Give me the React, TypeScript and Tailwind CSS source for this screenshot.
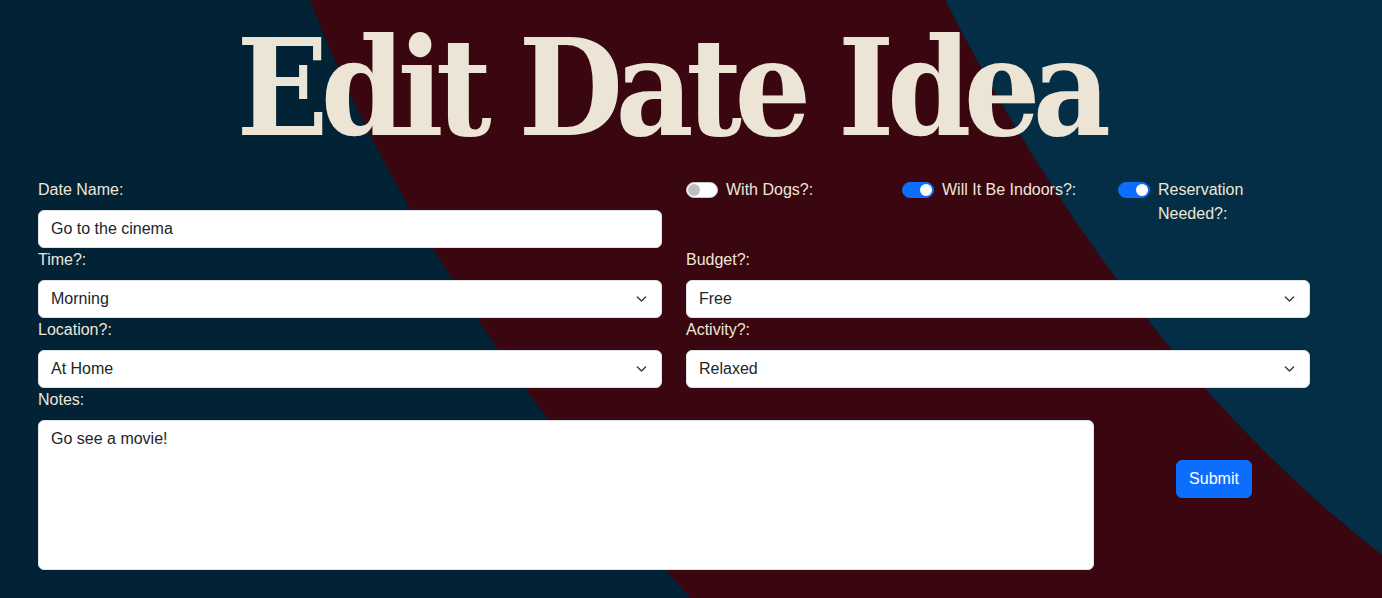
import { useState } from 'react';

const chevron = (
  <svg
    className="pointer-events-none absolute right-[15px] top-1/2 -translate-y-1/2"
    width="11"
    height="11"
    viewBox="0 0 16 16"
  >
    <path d="m2 5 6 6 6-6" fill="none" stroke="#343a40" strokeWidth="2" strokeLinecap="round" strokeLinejoin="round" />
  </svg>
);

function Toggle({ label, checked, onChange, labelWidth }: { label: string; checked: boolean; onChange: () => void; labelWidth: string }) {
  return (
    <div className="flex items-start gap-2">
      <button
        type="button"
        onClick={onChange}
        className={`mt-[4px] flex h-4 w-8 shrink-0 items-center rounded-full border px-[1px] ${
          checked ? 'justify-end border-[#0d6efd] bg-[#0d6efd]' : 'justify-start border-[#c7c7c7] bg-white'
        }`}
      >
        <span className={`h-3 w-3 rounded-full ${checked ? 'bg-white' : 'bg-[#bfbfbf]'}`} />
      </button>
      <span className={`${labelWidth} leading-6`}>{label}</span>
    </div>
  );
}

function Select({ value, options }: { value: string; options: string[] }) {
  return (
    <div className="relative">
      <select
        defaultValue={value}
        className="h-[38px] w-full appearance-none rounded-md border border-[#dee2e6] bg-white pl-3 pr-9 text-base text-[#212529] outline-none"
      >
        {options.map((o) => (
          <option key={o}>{o}</option>
        ))}
      </select>
      {chevron}
    </div>
  );
}

export default function App() {
  const [dogs, setDogs] = useState(false);
  const [indoors, setIndoors] = useState(true);
  const [reservation, setReservation] = useState(true);

  return (
    <div className="relative h-screen w-full overflow-hidden bg-[#022236] font-['Liberation_Sans',Arial,sans-serif] text-[#eee7d8]">
      {/* fondo con la franja diagonal */}
      <svg className="absolute inset-0 h-full w-full" viewBox="0 0 1382 598" preserveAspectRatio="none">
        <path d="M945 0 L1382 0 L1382 555 Q1130 360 945 0 Z" fill="#032e45" />
        <path d="M310 0 L945 0 Q1130 360 1382 555 L1382 598 L690 598 Q418 281 310 0 Z" fill="#3a0610" />
      </svg>

      <div className="relative">
        <h1 className="pt-[21px] pr-[42px] text-center font-['DejaVu_Serif_Condensed','DejaVu_Serif',serif] text-[134px] font-bold leading-none tracking-[-0.056em] text-[#ece5d6] font-stretch-condensed">
          Edit Date Idea
        </h1>

        <form className="mt-[23px] ml-[38px] w-[1272px]" onSubmit={(e) => e.preventDefault()}>
          <div className="grid grid-cols-2 gap-x-6">
            {/* fila 1 */}
            <div>
              <label className="mb-2 block leading-6">Date Name:</label>
              <input
                defaultValue="Go to the cinema"
                className="h-[38px] w-full rounded-md border border-[#dee2e6] bg-white px-3 text-base text-[#212529] outline-none"
              />
            </div>
            <div className="grid grid-cols-[216px_216px_192px]">
              <Toggle label="With Dogs?:" checked={dogs} onChange={() => setDogs(!dogs)} labelWidth="" />
              <Toggle label="Will It Be Indoors?:" checked={indoors} onChange={() => setIndoors(!indoors)} labelWidth="" />
              <Toggle
                label="Reservation Needed?:"
                checked={reservation}
                onChange={() => setReservation(!reservation)}
                labelWidth="w-[110px]"
              />
            </div>

            {/* fila 2 */}
            <div>
              <label className="mb-2 block leading-6">Time?:</label>
              <Select value="Morning" options={['Morning', 'Afternoon', 'Evening']} />
            </div>
            <div>
              <label className="mb-2 block leading-6">Budget?:</label>
              <Select value="Free" options={['Free', 'Cheap', 'Expensive']} />
            </div>

            {/* fila 3 */}
            <div>
              <label className="mb-2 block leading-6">Location?:</label>
              <Select value="At Home" options={['At Home', 'Out']} />
            </div>
            <div>
              <label className="mb-2 block leading-6">Activity?:</label>
              <Select value="Relaxed" options={['Relaxed', 'Active']} />
            </div>
          </div>

          {/* notas */}
          <div className="flex items-center">
            <div className="w-[1056px]">
              <label className="mb-2 block leading-6">Notes:</label>
              <textarea
                defaultValue="Go see a movie!"
                className="block h-[150px] w-full resize-none rounded-md border border-[#dee2e6] bg-white px-3 py-1.5 text-base text-[#212529] outline-none"
              />
            </div>
            <div className="ml-6 flex flex-1 justify-center">
              <button
                type="submit"
                className="rounded-md border border-[#0d6efd] bg-[#0d6efd] px-3 py-1.5 text-base leading-6 text-white"
              >
                Submit
              </button>
            </div>
          </div>
        </form>
      </div>
    </div>
  );
}
